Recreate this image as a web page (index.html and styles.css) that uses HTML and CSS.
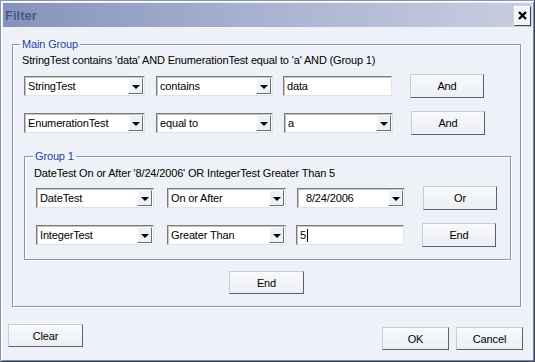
FILE: index.html
```html
<!DOCTYPE html>
<html lang="en">
<head>
  <meta charset="UTF-8">
  <title>Filter</title>
  <link rel="stylesheet" href="styles.css">
</head>
<body>
  <div class="window">
    <div class="titlebar">
      <span class="title">Filter</span>
      <button class="close" type="button" aria-label="Close">
        <svg width="9" height="9" viewBox="0 0 9 9"><path d="M1 1 L8 8 M8 1 L1 8" stroke="#000" stroke-width="2.4"/></svg>
      </button>
    </div>

    <div class="client">
      <fieldset class="group main-group">
        <legend>Main Group</legend>
        <p class="summary">StringTest contains 'data' AND EnumerationTest equal to 'a' AND (Group 1)</p>

        <div class="row">
          <div class="combo w121"><span>StringTest</span><i class="drop"></i></div>
          <div class="combo w117"><span>contains</span><i class="drop"></i></div>
          <div class="textbox w109">data</div>
          <button class="btn op" type="button">And</button>
        </div>

        <div class="row">
          <div class="combo w121"><span>EnumerationTest</span><i class="drop"></i></div>
          <div class="combo w117"><span>equal to</span><i class="drop"></i></div>
          <div class="combo w109"><span>a</span><i class="drop"></i></div>
          <button class="btn op" type="button">And</button>
        </div>

        <fieldset class="group sub-group">
          <legend>Group 1</legend>
          <p class="summary">DateTest On or After '8/24/2006' OR IntegerTest Greater Than 5</p>

          <div class="row">
            <div class="combo w118"><span>DateTest</span><i class="drop"></i></div>
            <div class="combo w119"><span>On or After</span><i class="drop"></i></div>
            <div class="combo date w108"><span>8/24/2006</span><i class="drop"></i></div>
            <button class="btn op" type="button">Or</button>
          </div>

          <div class="row">
            <div class="combo w118"><span>IntegerTest</span><i class="drop"></i></div>
            <div class="combo w119"><span>Greater Than</span><i class="drop"></i></div>
            <div class="textbox w108">5<b class="caret"></b></div>
            <button class="btn op" type="button">End</button>
          </div>
        </fieldset>

        <div class="end-row">
          <button class="btn end" type="button">End</button>
        </div>
      </fieldset>

      <div class="footer">
        <button class="btn clear" type="button">Clear</button>
        <div class="actions">
          <button class="btn ok" type="button">OK</button>
          <button class="btn cancel" type="button">Cancel</button>
        </div>
      </div>
    </div>
  </div>
</body>
</html>
```

FILE: styles.css
```css
/* dialog window frame */
body {
  margin: 0;
  font-family: "Liberation Sans", Arial, sans-serif;
  font-size: 11px;
  letter-spacing: -0.15px;
  color: #000;
  background: #eef2f8;
}

.window {
  width: 535px;
  height: 362px;
  box-sizing: border-box;
  border: 1px solid #8a94ac;
  border-right-color: #3c4458;
  border-bottom-color: #3c4458;
  padding: 2px;
  background: #eef2f8;
  box-shadow: inset 1px 1px 0 #ffffff, inset -1px -1px 0 #7c869c;
}

/* title bar */
.titlebar {
  height: 24px;
  display: flex;
  align-items: center;
  justify-content: space-between;
  padding: 0 1px 0 2px;
  background: linear-gradient(to right, #8593bb, #a6b0cf 45%, #c9cee0);
}

.title {
  font-weight: bold;
  font-size: 13px;
  letter-spacing: 0;
  color: #4b5888;
}

.close {
  width: 17px;
  height: 20px;
  padding: 0;
  margin-top: 1px;
  border: 1px solid;
  border-color: #ffffff #3e4250 #3e4250 #ffffff;
  background: #f2f4f8;
  display: flex;
  align-items: center;
  justify-content: center;
}

/* dialog body */
.client {
  padding: 11px 0 0 9px;
}

.group {
  margin: 0;
  box-sizing: border-box;
  border: 1px solid #8e96a8;
  box-shadow: 1px 1px 0 #ffffff, inset 1px 1px 0 #ffffff;
}

.group legend {
  padding: 0 2px;
  line-height: 13px;
  color: #1d3fa0;
}

.main-group {
  width: 509px;
  padding: 2px 0 12px 11px;
}

.main-group > legend {
  margin-left: -4px;
}

.sub-group {
  width: 487px;
  margin-top: 15px;
  padding: 3px 0 12px 10px;
}

.sub-group > legend {
  margin-left: -2px;
}

.summary {
  margin: 0 0 0 -2px;
  line-height: 14px;
  white-space: nowrap;
}

.sub-group .summary {
  margin-left: -1px;
}

/* one filter condition */
.row {
  display: flex;
  align-items: center;
  height: 24px;
  margin-top: 7px;
  gap: 10px;
}

.row + .row {
  margin-top: 13px;
}

.main-group .row .combo + .combo {
  margin-left: 1px;
}

.sub-group .row {
  margin-top: 6px;
  margin-left: 1px;
}

.sub-group .row + .row {
  margin-top: 13px;
}

.sub-group .row .combo:nth-child(2) {
  margin-left: 3px;
}

.w121 { width: 121px; }
.w117 { width: 117px; }
.w109 { width: 109px; }
.w118 { width: 118px; }
.w119 { width: 119px; }
.w108 { width: 108px; }

/* sunken combo and text boxes */
.combo,
.textbox {
  height: 20px;
  box-sizing: border-box;
  display: flex;
  align-items: center;
  background: #ffffff;
  border: 1px solid;
  border-color: #7a7a7a #dfe3ea #dfe3ea #7a7a7a;
  box-shadow: inset 1px 1px 0 #c4c4c4;
  padding-left: 3px;
}

.combo span {
  flex: 1;
  white-space: nowrap;
  overflow: hidden;
}

.date span {
  padding-left: 5px;
}

.drop {
  width: 15px;
  height: 16px;
  box-sizing: border-box;
  margin-right: 1px;
  border: 1px solid;
  border-color: #ffffff #6a6e7a #6a6e7a #ffffff;
  background: #eef1f6;
  display: flex;
  align-items: center;
  justify-content: center;
}

.drop::after {
  content: "";
  border-left: 4px solid transparent;
  border-right: 4px solid transparent;
  border-top: 4px solid #000;
  margin-top: 1px;
}

.caret {
  display: inline-block;
  width: 1px;
  height: 13px;
  background: #000;
  margin-left: 1px;
}

/* raised push buttons */
.btn {
  height: 24px;
  padding: 0;
  font-family: inherit;
  font-size: 11px;
  letter-spacing: -0.15px;
  color: #000;
  background: linear-gradient(#f8f9fb, #eceff4);
  border: 1px solid;
  border-color: #c9cdd6 #5c6070 #5c6070 #c9cdd6;
}

.op {
  width: 74px;
  margin-left: 8px;
}

.end-row {
  display: flex;
  justify-content: center;
  margin: 11px 11px 0 0;
}

.end {
  width: 75px;
  height: 23px;
}

/* bottom buttons */
.footer {
  display: flex;
  justify-content: space-between;
  align-items: flex-start;
  margin: 17px 0 0 -4px;
  padding-right: 9px;
}

.clear {
  width: 75px;
  height: 23px;
}

.actions {
  display: flex;
  gap: 7px;
  margin-top: 3px;
}

.ok,
.cancel {
  width: 67px;
  height: 23px;
}
```
